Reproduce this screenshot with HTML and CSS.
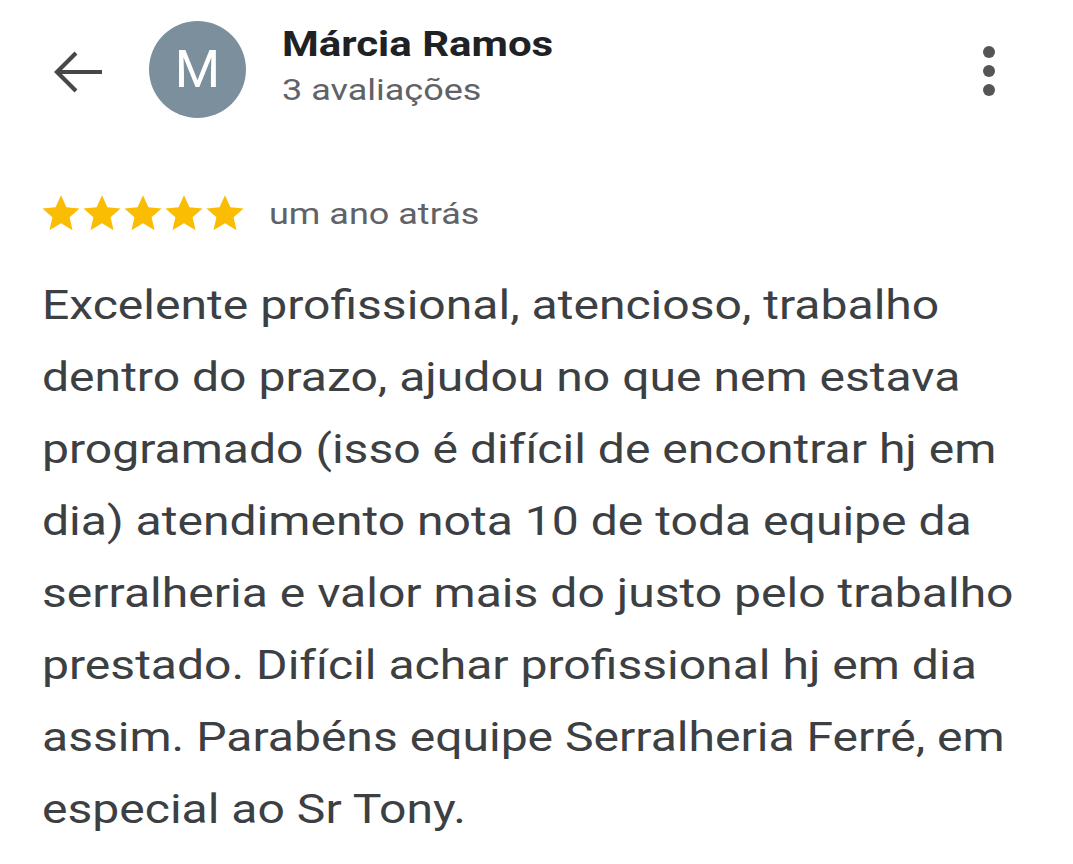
FILE: index.html
```html
<!DOCTYPE html>
<html lang="pt">
<head>
<meta charset="utf-8">
<link rel="stylesheet" href="styles.css">
</head>
<body>
<div class="page">
  <header class="header">
    <svg class="back" width="52" height="46" viewBox="0 0 52 46">
      <path d="M50 23 H5 M24 4 L5 23 L24 42" fill="none" stroke="#474747" stroke-width="4.2" stroke-linecap="butt" stroke-linejoin="miter"/>
    </svg>
    <div class="avatar">M</div>
    <div class="who">
      <div class="name"><span class="wide">Márcia Ramos</span></div>
      <div class="count"><span class="wide">3 avaliações</span></div>
    </div>
    <div class="more">
      <span class="dot"></span><span class="dot"></span><span class="dot"></span>
    </div>
  </header>
  <div class="meta">
    <div class="stars">
      <svg viewBox="0 0 24 24" class="star"><path d="M12 1.8l3.1 6.9 7.5.7-5.7 5 1.7 7.4L12 17.9l-6.6 3.9 1.7-7.4-5.7-5 7.5-.7z"/></svg>
      <svg viewBox="0 0 24 24" class="star"><path d="M12 1.8l3.1 6.9 7.5.7-5.7 5 1.7 7.4L12 17.9l-6.6 3.9 1.7-7.4-5.7-5 7.5-.7z"/></svg>
      <svg viewBox="0 0 24 24" class="star"><path d="M12 1.8l3.1 6.9 7.5.7-5.7 5 1.7 7.4L12 17.9l-6.6 3.9 1.7-7.4-5.7-5 7.5-.7z"/></svg>
      <svg viewBox="0 0 24 24" class="star"><path d="M12 1.8l3.1 6.9 7.5.7-5.7 5 1.7 7.4L12 17.9l-6.6 3.9 1.7-7.4-5.7-5 7.5-.7z"/></svg>
      <svg viewBox="0 0 24 24" class="star"><path d="M12 1.8l3.1 6.9 7.5.7-5.7 5 1.7 7.4L12 17.9l-6.6 3.9 1.7-7.4-5.7-5 7.5-.7z"/></svg>
    </div>
    <span class="when wide">um ano atrás</span>
  </div>
  <p class="review">Excelente profissional, atencioso, trabalho<br>dentro do prazo, ajudou no que nem estava<br>programado (isso é difícil de encontrar hj em<br>dia) atendimento nota 10 de toda equipe da<br>serralheria e valor mais do justo pelo trabalho<br>prestado. Difícil achar profissional hj em dia<br>assim. Parabéns equipe Serralheria Ferré, em<br>especial ao Sr Tony.</p>
</div>
</body>
</html>
```
FILE: styles.css
```css
html, body {
  margin: 0;
  padding: 0;
  background: #ffffff;
}
body {
  font-family: Roboto, "Liberation Sans", sans-serif;
  width: 1073px;
  height: 864px;
  overflow: hidden;
}
.page {
  padding: 0 0 0 42px;
}
.wide {
  display: inline-block;
  transform: scaleX(1.2);
  transform-origin: left center;
  white-space: nowrap;
}
.header {
  display: flex;
  align-items: center;
  height: 140px;
  padding-top: 1px;
  box-sizing: border-box;
}
.back {
  margin-left: 10px;
  margin-top: 2px;
  flex: none;
}
.avatar {
  width: 97px;
  height: 97px;
  border-radius: 50%;
  background: #7b909c;
  color: #ffffff;
  font-size: 52px;
  display: flex;
  align-items: center;
  justify-content: center;
  margin-left: 45px;
  margin-top: -2px;
  flex: none;
}
.who {
  margin-left: 36px;
  margin-top: -5px;
  flex: 1;
}
.name {
  font-size: 35px;
  font-weight: 700;
  color: #202124;
  line-height: 44px;
}
.count {
  font-size: 30px;
  color: #5f6368;
  line-height: 46px;
}
.more {
  display: flex;
  flex-direction: column;
  gap: 7px;
  margin-right: 78px;
  margin-top: 0;
}
.dot {
  width: 12px;
  height: 12px;
  border-radius: 50%;
  background: #555555;
}
.meta {
  display: flex;
  align-items: center;
  margin-top: 53px;
  height: 40px;
}
.stars {
  display: flex;
  margin-left: -2px;
}
.star {
  width: 42px;
  height: 42px;
  fill: #fbbc04;
  margin-right: -1px;
}
.when {
  font-size: 30px;
  color: #5f6368;
  margin-left: 24px;
}
.review {
  margin: 37px 0 0 0;
  width: 860px;
  font-size: 40.4px;
  line-height: 72px;
  color: #3c4043;
  white-space: nowrap;
  transform: scaleX(1.19);
  transform-origin: left top;
}
```
